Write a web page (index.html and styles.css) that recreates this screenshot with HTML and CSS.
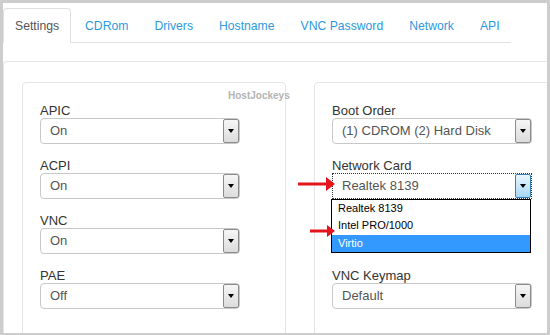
FILE: index.html
```html
<!DOCTYPE html>
<html>
<head>
<meta charset="utf-8">
<link rel="stylesheet" href="styles.css">
</head>
<body>
<div class="frame">
  <ul class="nav">
    <li class="tab active"><a>Settings</a></li>
    <li class="tab"><a>CDRom</a></li>
    <li class="tab"><a>Drivers</a></li>
    <li class="tab"><a>Hostname</a></li>
    <li class="tab"><a>VNC Password</a></li>
    <li class="tab"><a>Network</a></li>
    <li class="tab"><a>API</a></li>
  </ul>
  <div class="panel">
    <div class="box left">
      <span class="watermark">HostJockeys</span>
      <div class="field">
        <div class="label">APIC</div>
        <div class="select"><span class="value">On</span><span class="btn"><i class="tri"></i></span></div>
      </div>
      <div class="field">
        <div class="label">ACPI</div>
        <div class="select"><span class="value">On</span><span class="btn"><i class="tri"></i></span></div>
      </div>
      <div class="field">
        <div class="label">VNC</div>
        <div class="select"><span class="value">On</span><span class="btn"><i class="tri"></i></span></div>
      </div>
      <div class="field">
        <div class="label">PAE</div>
        <div class="select"><span class="value">Off</span><span class="btn"><i class="tri"></i></span></div>
      </div>
    </div>
    <div class="box right">
      <div class="field">
        <div class="label">Boot Order</div>
        <div class="select"><span class="value">(1) CDROM (2) Hard Disk</span><span class="btn"><i class="tri"></i></span></div>
      </div>
      <div class="field open">
        <div class="label">Network Card</div>
        <div class="select focus"><span class="value">Realtek 8139</span><span class="btn hover"><i class="tri"></i></span></div>
        <ul class="menu">
          <li>Realtek 8139</li>
          <li>Intel PRO/1000</li>
          <li class="sel">Virtio</li>
        </ul>
        <svg class="arrow arrow1" width="40" height="20" viewBox="0 0 40 20"><path d="M0 8.5 H28 V3 L37 10 L28 17 V11.5 H0 Z" fill="#e3141c"/></svg>
        <svg class="arrow arrow2" width="26" height="14" viewBox="0 0 26 14"><path d="M0 5.5 H17 V1 L25 7 L17 13 V8.5 H0 Z" fill="#e3141c"/></svg>
      </div>
      <div class="field">
        <div class="label">VNC Keymap</div>
        <div class="select"><span class="value">Default</span><span class="btn"><i class="tri"></i></span></div>
      </div>
    </div>
  </div>
</div>
</body>
</html>
```

FILE: styles.css
```css
* { box-sizing: border-box; }
html, body { margin: 0; padding: 0; background: #fff; }
body { font-family: "Liberation Sans", Arial, sans-serif; }

.frame {
  width: 550px;
  height: 335px;
  border: 3px solid #cdcdcd;
  border-top-width: 3px;
  border-bottom-width: 2px;
  overflow: hidden;
  background: #fff;
}

.nav {
  list-style: none;
  margin: 5px 0 0 0;
  padding: 0;
  width: 508px;
  display: flex;
  border-bottom: 1px solid #e2e2e2;
}
.tab { margin-right: 2px; margin-bottom: -1px; flex: none; }
.tab a {
  display: block;
  white-space: nowrap;
  font-size: 12.2px;
  line-height: 17px;
  padding: 9px 11px 7px;
  border: 1px solid transparent;
  border-radius: 4px 4px 0 0;
  color: #2d9ae0;
}
.tab.active a {
  color: #555;
  border-color: #e0e0e0;
  border-bottom-color: #fff;
  background: #fff;
}

.panel {
  margin-top: 18px;
  border-top: 1px solid #e6e6e6;
  border-left: 1px solid #e6e6e6;
  border-top-left-radius: 4px;
  padding: 20px 0 0 18px;
  display: flex;
  gap: 28px;
  height: 400px;
}
.box {
  position: relative;
  flex: 0 0 264px;
  border: 1px solid #e6e6e6;
  border-radius: 4px;
  padding: 20px 17px;
}

.watermark {
  position: absolute;
  top: 7px;
  left: 205px;
  font-size: 10px;
  font-weight: bold;
  color: #b4b4b4;
  white-space: nowrap;
}

.field { position: relative; margin-bottom: 14px; }
.field.open { margin-bottom: 69px; }
.label {
  font-size: 13px;
  line-height: 15px;
  color: #333;
}
.select {
  display: flex;
  width: 200px;
  height: 26px;
  border: 1px solid #c8c8c8;
  border-radius: 4px;
  background: #fff;
}
.value {
  flex: 1;
  padding-left: 9px;
  font-size: 13px;
  line-height: 24px;
  color: #555;
  white-space: nowrap;
}
.btn {
  flex: 0 0 16px;
  border: 1px solid #8c8c8c;
  border-radius: 2px;
  background: linear-gradient(#f6f6f6, #dcdcdc);
  display: flex;
  align-items: center;
  justify-content: center;
}
.tri {
  width: 0; height: 0;
  border-left: 3.5px solid transparent;
  border-right: 3.5px solid transparent;
  border-top: 4px solid #000;
}

.select.focus {
  border: 1px dotted #333;
  border-radius: 0;
}
.btn.hover {
  border-color: #3c7fb1;
  background: linear-gradient(#eaf6fd, #a7d9f5);
}

.menu {
  position: absolute;
  top: 41px;
  left: -1px;
  width: 200px;
  margin: 0;
  padding: 0;
  list-style: none;
  border: 1px solid #000;
  background: #fff;
  z-index: 2;
}
.menu li {
  height: 17.4px;
  line-height: 17px;
  padding-left: 6px;
  font-size: 11px;
  color: #000;
}
.menu li.sel {
  background: #3399ff;
  color: #fff;
}

.arrow { position: absolute; z-index: 3; }
.arrow1 { left: -34px; top: 16px; }
.arrow2 { left: -22px; top: 66px; }
```
